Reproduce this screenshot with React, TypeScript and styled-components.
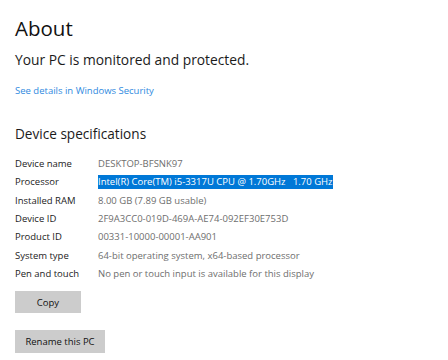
import React from 'react'
import styled, { createGlobalStyle } from 'styled-components'

const GlobalStyle = createGlobalStyle`
  html, body {
    margin: 0;
    padding: 0;
    background: #ffffff;
  }
  body {
    font-family: 'Open Sans', 'Noto Sans', sans-serif;
    color: #1b1b1b;
  }
`

const Page = styled.div`
  width: 448px;
  height: 360px;
  padding: 13px 15px 0;
  box-sizing: border-box;
  overflow: hidden;
`

const Title = styled.h1`
  margin: 0;
  font-size: 20.5px;
  line-height: 30px;
  font-weight: 400;
  color: #111;
`

const Status = styled.div`
  margin-top: 7px;
  font-size: 13.8px;
  line-height: 20px;
  color: #1b1b1b;
`

const Link = styled.a`
  display: block;
  margin-top: 14px;
  font-size: 9.5px;
  line-height: 14px;
  color: #2f8ae0;
  text-decoration: none;
  cursor: pointer;
`

const SectionTitle = styled.h2`
  margin: 26px 0 0;
  font-size: 13.6px;
  line-height: 20px;
  font-weight: 400;
  color: #1b1b1b;
`

const SpecTable = styled.div`
  margin-top: 11px;
  display: grid;
  grid-template-columns: 83px max-content;
  grid-auto-rows: 18.3px;
  align-items: center;
  justify-items: start;
`

const Label = styled.div`
  font-size: 9.5px;
  line-height: 14px;
  color: #222;
  white-space: nowrap;
`

const Value = styled.div<{ selected?: boolean }>`
  font-size: 9.5px;
  line-height: 14px;
  color: ${({ selected }) => (selected ? '#ffffff' : '#6e6e6e')};
  background: ${({ selected }) => (selected ? '#0078d7' : 'transparent')};
  white-space: pre;
`

const Button = styled.button<{ w: number; h: number }>`
  display: block;
  width: ${({ w }) => w}px;
  height: ${({ h }) => h}px;
  margin: 0;
  padding: 0;
  border: none;
  background: #cccccc;
  font-family: inherit;
  font-size: 9.5px;
  color: #111;
  cursor: pointer;
`

const ButtonRow = styled.div<{ gap: number }>`
  margin-top: ${({ gap }) => gap}px;
`

const specs: [string, string, boolean?][] = [
  ['Device name', 'DESKTOP-BFSNK97'],
  ['Processor', 'Intel(R) Core(TM) i5-3317U CPU @ 1.70GHz   1.70 GHz', true],
  ['Installed RAM', '8.00 GB (7.89 GB usable)'],
  ['Device ID', '2F9A3CC0-019D-469A-AE74-092EF30E753D'],
  ['Product ID', '00331-10000-00001-AA901'],
  ['System type', '64-bit operating system, x64-based processor'],
  ['Pen and touch', 'No pen or touch input is available for this display'],
]

export default function App() {
  return (
    <>
      <GlobalStyle />
      <Page>
        <Title>About</Title>
        <Status>Your PC is monitored and protected.</Status>
        <Link>See details in Windows Security</Link>
        <SectionTitle>Device specifications</SectionTitle>
        <SpecTable>
          {specs.map(([label, value, selected]) => (
            <React.Fragment key={label}>
              <Label>{label}</Label>
              <Value selected={selected}>{value}</Value>
            </React.Fragment>
          ))}
        </SpecTable>
        <ButtonRow gap={8}>
          <Button w={66} h={22}>Copy</Button>
        </ButtonRow>
        <ButtonRow gap={17}>
          <Button w={90} h={23}>Rename this PC</Button>
        </ButtonRow>
      </Page>
    </>
  )
}
